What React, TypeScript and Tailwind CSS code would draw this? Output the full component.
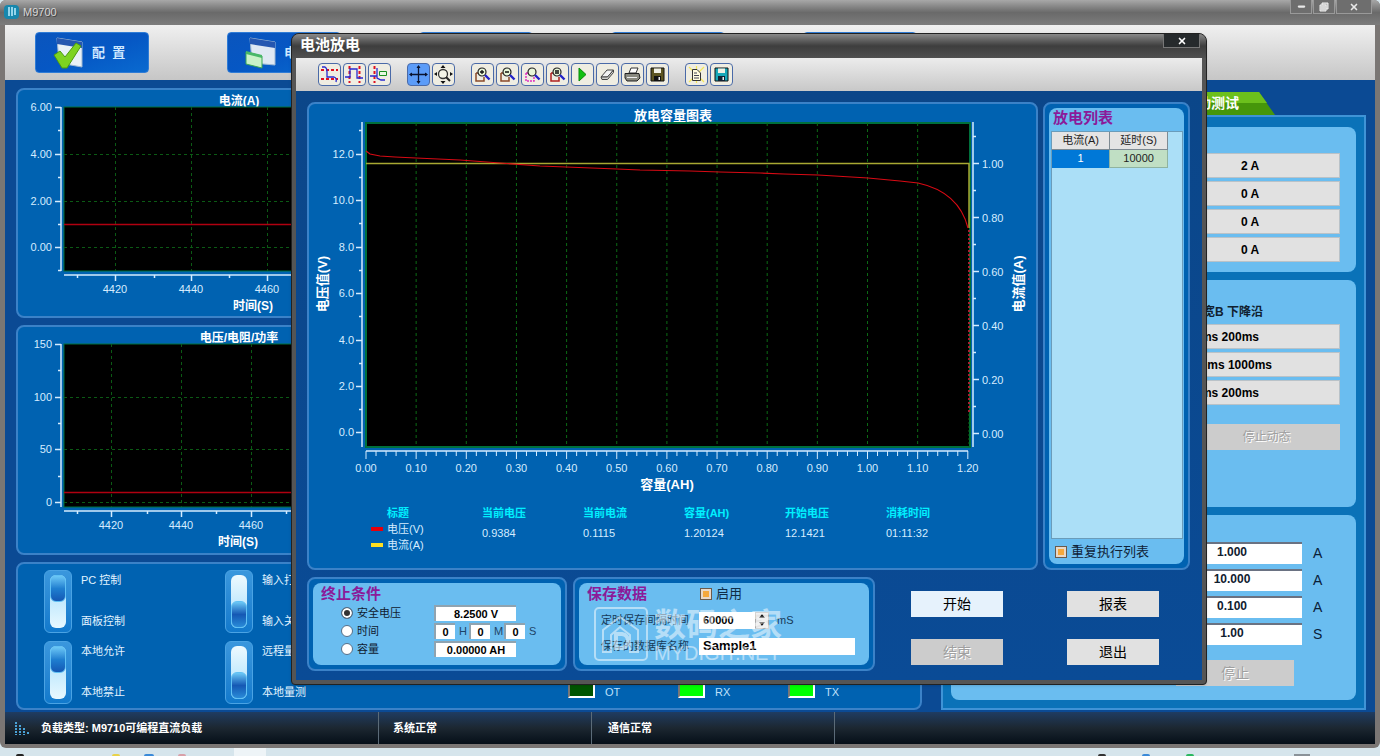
import type { ReactNode } from "react";
import { Minus, X } from "lucide-react";

type Tick = { at: number; label?: string };

const currentY: Tick[] = [
  { at: 17, label: "6.00" },
  { at: 40 },
  { at: 64, label: "4.00" },
  { at: 87 },
  { at: 111, label: "2.00" },
  { at: 134 },
  { at: 157, label: "0.00" },
  { at: 180 },
];
const currentX: Tick[] = [
  { at: 59 },
  { at: 97, label: "4420" },
  { at: 136 },
  { at: 173, label: "4440" },
  { at: 211 },
  { at: 249, label: "4460" },
];
const voltageY: Tick[] = [
  { at: 17, label: "150" },
  { at: 43 },
  { at: 70, label: "100" },
  { at: 96 },
  { at: 122, label: "50" },
  { at: 149 },
  { at: 175, label: "0" },
];
const voltageX: Tick[] = [
  { at: 59 },
  { at: 93, label: "4420" },
  { at: 129 },
  { at: 163, label: "4440" },
  { at: 198 },
  { at: 233, label: "4460" },
  { at: 268 },
];

function SmallChart(props: {
  title: string;
  top: number;
  bottom: number;
  yTicks: Tick[];
  xTicks: Tick[];
  line: number;
  axisTitleX: number;
}) {
  const { title, top, bottom, yTicks, xTicks, line, axisTitleX } = props;
  return (
    <svg
      viewBox="0 0 446 226"
      className="w-[446px] h-[226px] font-['Liberation_Sans','Noto_Sans_CJK_SC',sans-serif]"
    >
      <text x="221" y={top - 2} textAnchor="middle" className="fill-white text-xs font-bold">
        {title}
      </text>
      <rect x="46" y={top} width="350" height={bottom - top} fill="#000" stroke="#00703c" />
      <g stroke="#0b5a14" strokeDasharray="3 3">
        {xTicks
          .filter((t) => t.label)
          .map((t) => (
            <path key={t.at} d={`M${t.at}.5 ${top}V${bottom}`} />
          ))}
        {yTicks
          .filter((t) => t.label && t.at > top + 4)
          .map((t) => (
            <path key={t.at} d={`M46 ${t.at}.5H396`} />
          ))}
      </g>
      <path d={`M46 ${line}.5H396`} stroke="#b00010" strokeWidth="1.5" />
      <g stroke="#d5ecff" strokeWidth="1.5">
        <path d={`M43 ${top}V${bottom}`} />
        <path d={`M46 ${bottom + 4}H396`} />
        {yTicks.map((t) => (
          <path key={t.at} d={`M${t.label ? 37 : 40} ${t.at}.5H43`} />
        ))}
        {xTicks.map((t) => (
          <path key={t.at} d={`M${t.at}.5 ${bottom + 4}v${t.label ? 6 : 3}`} />
        ))}
      </g>
      <g className="fill-[#d5ecff] text-[11px]">
        {yTicks.map((t) => (
          <text key={t.at} x="34" y={t.at + 4} textAnchor="end">
            {t.label}
          </text>
        ))}
        {xTicks.map((t) => (
          <text key={t.at} x={t.at} y={bottom + 22} textAnchor="middle">
            {t.label}
          </text>
        ))}
      </g>
      <text x={axisTitleX} y={bottom + 39} textAnchor="middle" className="fill-white text-xs font-bold">
        时间(S)
      </text>
    </svg>
  );
}

const volts = ["12.0", "10.0", "8.0", "6.0", "4.0", "2.0", "0.0"];
const amps = ["1.00", "0.80", "0.60", "0.40", "0.20", "0.00"];

function DischargeChart() {
  const hours = Array.from({ length: 13 }, (_, i) => (i / 10).toFixed(2));
  return (
    <svg
      viewBox="0 0 727 392"
      className="block w-full font-['Liberation_Sans','Noto_Sans_CJK_SC',sans-serif]"
    >
      <rect x="57" y="19" width="604" height="324" fill="#000" stroke="#00703c" strokeWidth="2" />
      <g stroke="#0b6a14" strokeDasharray="3 3">
        {hours.slice(1, 12).map((h, i) => (
          <path key={h} d={`M${57 + (i + 1) * 50.15} 19V343`} />
        ))}
      </g>
      <path d="M57 59.5H660V124" fill="none" stroke="#a8a832" strokeWidth="1.5" />
      <path
        d="M57 47L61 50L71 52L86 53L107 54L151 56L191 59L231 62L257 63L308 65L331 66L381 67L411 68L451 69L475 70L509 71L559 74L591 77L609 79Q650 88 659 124"
        fill="none"
        stroke="#d80a14"
        strokeWidth="1.2"
      />
      <path d="M660 126V310" stroke="#a82030" strokeDasharray="2 2" strokeWidth="2" />
      <path d="M660 310V343" stroke="#0b6a14" strokeDasharray="2 2" />
      <g stroke="#d5ecff" strokeWidth="1.5">
        <path d="M53 18V343M664 18V343M57 347H659" />
        <path d="M50 26.5H53M664 32.5H667" />
        {volts.map((v, i) => (
          <path key={v} d={`M47 ${Math.round(50 + i * 46.4)}.5H53`} />
        ))}
        {volts.slice(1).map((v, i) => (
          <path key={v} d={`M50 ${Math.round(73 + i * 46.4)}.5H53`} />
        ))}
        {amps.map((a, i) => (
          <path key={a} d={`M664 ${59 + i * 54}.5H670`} />
        ))}
        {amps.slice(1).map((a, i) => (
          <path key={a} d={`M664 ${86 + i * 54}.5H667`} />
        ))}
      </g>
      <g stroke="#d5ecff">
        {Array.from({ length: 61 }, (_, i) => (
          <path key={i} d={`M${57 + i * 10.03} 347v${i % 5 ? 5 : 8}`} />
        ))}
      </g>
      <g className="fill-[#d5ecff] text-[11px]">
        {volts.map((v, i) => (
          <text key={v} x="45" y={Math.round(54 + i * 46.4)} textAnchor="end">
            {v}
          </text>
        ))}
        {amps.map((a, i) => (
          <text key={a} x="673" y={64 + i * 54}>
            {a}
          </text>
        ))}
        {hours.map((h, i) => (
          <text key={h} x={57 + i * 50.15} y="368" textAnchor="middle">
            {h}
          </text>
        ))}
      </g>
      <g textAnchor="middle" className="fill-white text-[13px] font-bold">
        <text x="364" y="16">
          放电容量图表
        </text>
        <text x="358" y="385">
          容量(AH)
        </text>
        <text transform="translate(18 180) rotate(-90)">电压值(V)</text>
        <text transform="translate(714 180) rotate(-90)">电流值(A)</text>
      </g>
    </svg>
  );
}

const readings = [
  ["当前电压", "0.9384"],
  ["当前电流", "0.1115"],
  ["容量(AH)", "1.20124"],
  ["开始电压", "12.1421"],
  ["消耗时间", "01:11:32"],
];

function Legend() {
  return (
    <div className="flex pl-[62px] pt-[9px] pb-[15px] text-[11px] leading-4">
      <div className="w-[111px]">
        <div className="pl-4 font-bold text-[#00f0ff]">标题</div>
        <div className="flex items-center gap-1 text-[#d5ecff]">
          <span className="w-3 h-1 bg-red-600" />
          电压(V)
        </div>
        <div className="flex items-center gap-1 text-[#d5ecff]">
          <span className="w-3 h-1 bg-yellow-300" />
          电流(A)
        </div>
      </div>
      {readings.map(([name, value]) => (
        <div key={name} className="w-[101px]">
          <div className="font-bold text-[#00f0ff]">{name}</div>
          <div className="pt-1 text-[#d5ecff]">{value}</div>
        </div>
      ))}
    </div>
  );
}

function Toggle({ on, upper, lower }: { on: boolean; upper: string; lower: string }) {
  return (
    <div className="flex gap-[9px]">
      <button
        type="button"
        role="switch"
        aria-checked={on}
        aria-label={upper}
        className="w-7 h-[63px] p-1 rounded-md border border-[#4aa3e4] bg-linear-to-b from-[#3a97dd] to-[#1179cc] flex justify-center"
      >
        <span
          className={`flex w-4 h-[53px] rounded-md ${
            on
              ? "items-start bg-linear-to-b from-[#9edcfb] to-[#e8f8ff]"
              : "items-end bg-linear-to-b from-[#eefaff] to-[#9edcfb]"
          }`}
        >
          <span
            className={`w-4 h-[27px] rounded-md border border-[#5fc0f4] ${
              on
                ? "bg-linear-to-b from-[#6cc8f6] via-[#1f7fd0] to-[#1558b4]"
                : "bg-linear-to-b from-[#6cc8f6] via-[#1558b4] to-[#2a8bd8]"
            }`}
          />
        </span>
      </button>
      <div className="flex flex-col justify-between pt-0.5 pb-1 text-[11px] leading-4 text-[#e2f3ff]">
        <span>{upper}</span>
        <span>{lower}</span>
      </div>
    </div>
  );
}

const leds = [
  { name: "OT", color: "bg-[#005400]" },
  { name: "RX", color: "bg-[#00ff00]" },
  { name: "TX", color: "bg-[#00ff00]" },
];

function Panel({ children, className = "" }: { children: ReactNode; className?: string }) {
  return (
    <div className={`border-2 border-[#3b82c8] rounded-lg bg-[#0062b1] ${className}`}>{children}</div>
  );
}

function MainButton({ label, text, children }: { label: string; text?: string; children?: ReactNode }) {
  return (
    <button
      type="button"
      aria-label={label}
      className="w-[114px] h-[41px] shrink-0 rounded-sm border border-[#2f7cd6] bg-linear-to-br from-[#0a55bd] via-[#0657c4] to-[#0a6ad0] flex items-center gap-2 pl-4 text-[13px] font-bold text-[#cfe8ff]"
    >
      {children}
      {text && <span className="whitespace-nowrap">{text}</span>}
    </button>
  );
}

function ConfigIcon() {
  return (
    <svg width="32" height="34" viewBox="0 0 32 34">
      <path d="M5 2L30 6V31L7 27Z" fill="#e9f0f6" stroke="#9db8d3" />
      <path d="M5 2L30 6V12L5 8Z" fill="#2557b0" />
      <path d="M2 19L8 15L13 21L24 7L29 10L15 32H10Z" fill="#7ed321" stroke="#4c9a10" />
    </svg>
  );
}

function BatteryIcon() {
  return (
    <svg width="32" height="34" viewBox="0 0 32 34">
      <path d="M6 2L31 6V29L8 27Z" fill="#dfe8f3" stroke="#9db8d3" />
      <path d="M6 2L31 6V12L6 8Z" fill="#2557b0" />
      <path d="M2 16L18 20V32L2 28Z" fill="#c9f2c8" stroke="#3aa655" />
      <path d="M2 15L18 19V22L2 18Z" fill="#48b868" />
    </svg>
  );
}

const card = "bg-[#6abdf0] rounded-lg";

function ValueRow({ text, pad = "justify-center" }: { text: string; pad?: string }) {
  return (
    <div className="flex justify-end">
      <button
        type="button"
        className={`w-[180px] h-[25px] flex items-center border border-[#b9c2c8] bg-[#e1e1e1] text-xs font-bold text-black ${pad}`}
      >
        {text}
      </button>
    </div>
  );
}

const testFields = [
  ["1.000", "A"],
  ["10.000", "A"],
  ["0.100", "A"],
  ["1.00", "S"],
];

function RightColumn() {
  return (
    <div className="w-[425px] shrink-0 pt-1 flex flex-col">
      <div className="flex pl-[190px]">
        <div className="relative w-[144px] h-[23px]">
          <svg viewBox="0 0 144 23" preserveAspectRatio="none" className="absolute inset-0 w-full h-full">
            <path d="M0 0H128L144 23H0Z" fill="#46960a" />
            <path d="M0 0H128L136 11H0Z" fill="#6cc01c" />
          </svg>
          <a href="#test" className="relative block pr-9 text-right text-sm leading-[23px] font-bold text-white">
            自动测试
          </a>
        </div>
      </div>
      <div className="flex-1 border-2 border-[#3f93d6] bg-[#0a72b8] px-2 pt-2.5 pb-2 flex flex-col gap-2">
        <div className={`${card} pt-[26px] pr-4 pb-2.5 flex flex-col gap-[3px]`}>
          <ValueRow text="2 A" />
          <ValueRow text="0 A" />
          <ValueRow text="0 A" />
          <ValueRow text="0 A" />
        </div>
        <div className={`${card} flex-1 pt-6 pr-4 flex flex-col gap-[3px]`}>
          <div className="pr-[77px] pb-px text-right text-xs leading-4 font-bold">脉宽B 下降沿</div>
          <ValueRow text="200ms 200ms" pad="justify-end pr-20" />
          <ValueRow text="200ms 1000ms" pad="justify-end pr-[67px]" />
          <ValueRow text="200ms 200ms" pad="justify-end pr-20" />
          <div className="flex justify-end pt-4">
            <button
              type="button"
              disabled
              className="w-[147px] h-[26px] bg-[#cccccc] text-xs text-[#a0a0a0] text-shadow-[1px_1px_0_#fff]"
            >
              停止动态
            </button>
          </div>
        </div>
        <div className={`${card} pt-[27px] pr-[31px] pb-3.5`}>
          <div className="flex flex-col items-end gap-[5px]">
            {testFields.map(([value, unit]) => (
              <label key={value} className="flex items-center gap-[11px] text-sm">
                <input
                  readOnly
                  value={value}
                  className="w-[140px] h-[22px] pb-1 bg-white border-t-2 border-gray-500 text-center text-xs font-bold outline-none"
                />
                <span className="w-3 text-[#0a2038]">{unit}</span>
              </label>
            ))}
          </div>
          <div className="flex justify-end pt-[15px] pr-[31px]">
            <button
              type="button"
              disabled
              className="w-[118px] h-[26px] bg-[#cccccc] text-sm text-[#a0a0a0] text-shadow-[1px_1px_0_#fff]"
            >
              停止
            </button>
          </div>
        </div>
      </div>
    </div>
  );
}

function Magnifier({ sign, box = "#8a4a2a" }: { sign?: string; box?: string }) {
  return (
    <>
      <path
        d="M3 8V16H11V12M3 8H6"
        fill="none"
        stroke={box}
        strokeWidth="1.5"
        strokeDasharray={sign === undefined ? "2 1" : undefined}
      />
      <circle cx="9" cy="7" r="4" fill="#e8f6d8" stroke="#222" strokeWidth="1.2" />
      {sign && <path d={sign} stroke="#111" strokeWidth="1.3" />}
      <path d="M12 10L16.5 14.5" stroke="#2222c8" strokeWidth="2.4" />
    </>
  );
}

const tools: { name: string; icon: ReactNode; active?: boolean }[][] = [
  [
    {
      name: "横向游标",
      icon: (
        <>
          <path d="M1 5H18M1 14H18" stroke="#e01020" strokeWidth="2" strokeDasharray="3 2" />
          <path d="M2 2H5Q7 3 7 7V12H14Q17 13 16 17" fill="none" stroke="#2a2ad0" strokeWidth="1.3" />
        </>
      ),
    },
    {
      name: "纵向游标",
      icon: (
        <>
          <path d="M4.500 1V18M14.500 1V18" stroke="#e01020" strokeWidth="2" strokeDasharray="3 2" />
          <path d="M0 12H5V4H12V13H18" fill="none" stroke="#2a2ad0" strokeWidth="1.3" />
        </>
      ),
    },
    {
      name: "游标标注",
      icon: (
        <>
          <path d="M4.500 1V18" stroke="#e01020" strokeWidth="2" strokeDasharray="3 2" />
          <path d="M0 11H7M7 3V13L11 15H15" fill="none" stroke="#2a2ad0" strokeWidth="1.3" />
          <path d="M9.500 6.500H16.500V10.500H9.500Z" fill="#e8f8e0" stroke="#1a9020" />
        </>
      ),
    },
  ],
  [
    {
      name: "移动",
      active: true,
      icon: (
        <>
          <path d="M9.500 1V18M1 9.500H18" stroke="#0a1430" strokeWidth="1.3" />
          <path
            d="M9.500 0L11.500 3H7.500ZM9.500 19L11.500 16H7.500ZM0 9.500L3 7.500V11.500ZM19 9.500L16 7.500V11.500Z"
            fill="#0a1430"
          />
        </>
      ),
    },
    {
      name: "缩放",
      icon: (
        <>
          <circle cx="9" cy="9" r="4.500" fill="#f4f4e8" stroke="#333" strokeWidth="1.3" />
          <path d="M12 12L16 16" stroke="#222" strokeWidth="2" />
          <path d="M9 0L11.500 3H6.500ZM9 19L11.500 16H6.500ZM0 9L3 7V11ZM19 9L16 7V11Z" fill="#111" />
        </>
      ),
    },
  ],
  [
    { name: "放大", icon: <Magnifier sign="M7 7H11M9 5V9" /> },
    { name: "缩小", icon: <Magnifier sign="M7 7H11" /> },
    { name: "框选放大", icon: <Magnifier box="#e030c0" /> },
    { name: "还原", icon: <Magnifier sign="M7 6H11M7 8H11" box="#b02020" /> },
    { name: "运行", icon: <path d="M6 3L13 9.500L6 16Z" fill="#12c012" stroke="#0a8a0a" /> },
    {
      name: "清除",
      icon: (
        <>
          <path d="M3 12L9 5H15.500L9.500 12Z" fill="#f2f2f2" stroke="#444" />
          <path d="M3 12H9.500L15.500 5V7.500L9.500 14.500H4Z" fill="#d0d0cc" stroke="#444" />
        </>
      ),
    },
    {
      name: "打印",
      icon: (
        <>
          <path d="M6 8L8 3H15L13 8Z" fill="#fff" stroke="#333" />
          <path d="M2 8.500H16L17 13L14 16H4L2 13Z" fill="#8a8a80" stroke="#222" />
          <path d="M4 12.500H14" stroke="#eee" />
        </>
      ),
    },
    {
      name: "保存",
      icon: (
        <>
          <path d="M3 3H16V16H3Z" fill="#5c5420" stroke="#111" />
          <path d="M6 3.500H13V8H6Z" fill="#f0f0e4" />
          <path d="M6 11H13V16H6Z" fill="#111" />
          <path d="M10.500 12H12V15H10.500Z" fill="#eee" />
        </>
      ),
    },
  ],
  [
    {
      name: "复制",
      icon: (
        <>
          <path d="M2 2L17 17M17 2L2 17M9.500 1V18" stroke="#f4e858" strokeWidth="1.2" />
          <path d="M5.500 4.500H10L13.500 8V15.500H5.500Z" fill="#fffbe0" stroke="#333" />
          <path d="M7 8H10M7 10.500H12M7 13H12" stroke="#445" />
        </>
      ),
    },
    {
      name: "保存数据",
      icon: (
        <>
          <path d="M3 3H16V16H3Z" fill="#18a8b8" stroke="#111" />
          <path d="M6 3.500H13V8H6Z" fill="#f0f0e4" />
          <path d="M6 11H13V16H6Z" fill="#123" />
          <path d="M10.500 12H12V15H10.500Z" fill="#eee" />
        </>
      ),
    },
  ],
];

const field =
  "bg-white border-t-2 border-l-2 border-[#8fa3b0] text-center text-[11px] font-bold text-black outline-none";
const heading = "text-[15px] leading-[18px] font-bold text-[#8b1a99]";

function BigCheck({ id }: { id: string }) {
  return (
    <input
      id={id}
      type="checkbox"
      defaultChecked
      className="appearance-none w-3 h-3 border border-[#6b5a4a] bg-[#f4a83c] ring-2 ring-inset ring-[#e8d8c8]"
    />
  );
}

const stopRadio =
  "appearance-none w-3 h-3 rounded-full bg-white border border-[#56708a] checked:bg-[#333] checked:ring-2 checked:ring-inset checked:ring-white";

function StopCard() {
  return (
    <Panel className="w-[260px] shrink-0 p-1">
      <div className={`${card} h-full pl-2 pt-0.5 pb-1`}>
        <h2 className={heading}>终止条件</h2>
        <div className="grid grid-cols-[93px_1fr] auto-rows-[18px] items-center pl-5 pt-px text-[11px]">
          <label className="flex items-center gap-1">
            <input type="radio" name="stop" defaultChecked className={stopRadio} />
            安全电压
          </label>
          <input aria-label="安全电压" defaultValue="8.2500 V" className={`${field} w-[82px] h-4`} />
          <label className="flex items-center gap-1">
            <input type="radio" name="stop" className={stopRadio} />
            时间
          </label>
          <div className="flex items-center gap-1 text-[#1d4468]">
            {["H", "M", "S"].map((u) => (
              <label key={u} className="flex items-center gap-1">
                <input defaultValue="0" className={`${field} w-[21px] h-4`} />
                <span className="w-[6px]">{u}</span>
              </label>
            ))}
          </div>
          <label className="flex items-center gap-1">
            <input type="radio" name="stop" className={stopRadio} />
            容量
          </label>
          <input aria-label="容量" defaultValue="0.00000 AH" className={`${field} w-[82px] h-4`} />
        </div>
      </div>
    </Panel>
  );
}

function Watermark() {
  return (
    <div className="absolute left-[19px] top-7 flex gap-1.5 opacity-50 pointer-events-none text-white">
      <svg width="54" height="54" viewBox="0 0 54 54" fill="none" stroke="#fff">
        <rect x="1" y="1" width="52" height="52" rx="4" strokeWidth="2" />
        <path d="M9 45V23L26 10L44 23V45H36V28L26 20L17 28V45Z" strokeWidth="2" />
        <path d="M22 27H28Q34 28 34 34Q34 40 28 41H22Z" strokeWidth="4" />
      </svg>
      <div>
        <div className="text-[32px] leading-9 font-bold">数码之家</div>
        <div className="text-xl leading-5">MYDIGIT.NET</div>
      </div>
    </div>
  );
}

function SaveCard() {
  return (
    <Panel className="relative w-[302px] shrink-0 p-1">
      <div className={`${card} h-full pl-2 pt-0.5 pb-1.5`}>
        <div className="flex items-center">
          <h2 className={`${heading} w-[113px]`}>保存数据</h2>
          <BigCheck id="enable" />
          <label htmlFor="enable" className="pl-1 text-[13px] leading-[18px] text-[#0f2c46]">
            启用
          </label>
        </div>
        <div className="grid grid-cols-[98px_1fr] auto-rows-[26px] items-center pl-3.5 pt-1 text-[11px] text-[#173a58]">
          <label htmlFor="interval">定时保存间隔时间</label>
          <div className="flex items-center gap-2">
            <div className="flex h-[17px] bg-white">
              <input id="interval" defaultValue="60000" className="w-14 pl-1 text-[11px] font-bold text-black outline-none" />
              <div className="flex flex-col w-3.5 bg-[#e4e4e4] border border-[#aaa]">
                <button type="button" aria-label="增加" className="flex-1 flex items-center justify-center">
                  <svg width="6" height="4" viewBox="0 0 6 4">
                    <path d="M0 4L3 0L6 4Z" fill="#111" />
                  </svg>
                </button>
                <button type="button" aria-label="减少" className="flex-1 flex items-center justify-center">
                  <svg width="6" height="4" viewBox="0 0 6 4">
                    <path d="M0 0L3 4L6 0Z" fill="#111" />
                  </svg>
                </button>
              </div>
            </div>
            <span>mS</span>
          </div>
          <label htmlFor="dbname">保存的数据库名称</label>
          <input
            id="dbname"
            defaultValue="Sample1"
            className="w-[156px] h-[17px] pl-1 bg-white text-[13px] font-bold text-black outline-none"
          />
        </div>
      </div>
      <Watermark />
    </Panel>
  );
}

function DischargeDialog() {
  return (
    <section
      role="dialog"
      aria-label="电池放电"
      className="absolute left-[291px] right-[173px] top-[33px] flex flex-col rounded-t-lg rounded-b-sm border border-[#222] bg-[#555555] shadow-sm overflow-hidden"
    >
      <header className="h-6 flex items-start justify-between pl-2 pr-1.5 bg-linear-to-b from-[#8a8a8a] via-[#3e3e3e] to-[#505050]">
        <h1 className="text-[15px] leading-[22px] font-bold text-white">电池放电</h1>
        <button
          type="button"
          aria-label="关闭"
          className="w-[37px] h-[14px] flex items-center justify-center border border-t-0 border-[#777] bg-[#262a2c] text-white"
        >
          <X size={10} strokeWidth={4} />
        </button>
      </header>
      <div className="mx-1 mb-1 flex flex-col">
        <div className="h-[33px] flex items-center gap-4 pl-[22px] bg-linear-to-b from-[#ececec] to-[#c8c8c8]">
          {tools.map((group, i) => (
            <div key={i} className="flex gap-0.5">
              {group.map((tool) => (
                <button
                  key={tool.name}
                  type="button"
                  aria-label={tool.name}
                  className={`w-[23px] h-[23px] flex items-center justify-center rounded-sm border border-[#4a6aa8] ${
                    tool.active ? "bg-[#5c9cf8]" : "bg-[#efede2]"
                  }`}
                >
                  <svg width="19" height="19" viewBox="0 0 19 19">
                    {tool.icon}
                  </svg>
                </button>
              ))}
            </div>
          ))}
        </div>
        <div className="bg-linear-to-b from-[#0b4689] to-[#0a4b96] pl-[11px] pr-3 pt-[11px] pb-[9px]">
          <div className="flex gap-[5px]">
            <Panel className="flex-1 min-w-0">
              <DischargeChart />
              <Legend />
            </Panel>
            <Panel className="w-[147px] shrink-0 p-1 flex">
              <div className={`${card} flex-1 flex flex-col pl-0.5 pr-px`}>
                <h2 className={`${heading} pt-px pb-1 pl-0.5`}>放电列表</h2>
                <div className="flex-1 border border-[#6a9cba] bg-[#abdff7]">
                  <table className="w-[116px] table-fixed border-collapse text-center text-[11px] leading-[17px]">
                    <thead>
                      <tr className="bg-[#e4e4e4] text-[#222]">
                        <th className="border border-t-0 border-l-0 border-[#7d8a92] font-normal">电流(A)</th>
                        <th className="border border-t-0 border-[#7d8a92] font-normal">延时(S)</th>
                      </tr>
                    </thead>
                    <tbody>
                      <tr>
                        <td className="bg-[#0078d7] text-white">1</td>
                        <td className="border border-[#8fb3a0] bg-[#c0dfc4] text-[#222]">10000</td>
                      </tr>
                    </tbody>
                  </table>
                </div>
                <div className="flex items-center gap-1 h-[25px] pl-1">
                  <BigCheck id="repeat" />
                  <label htmlFor="repeat" className="text-[13px] text-[#0f2238] whitespace-nowrap">
                    重复执行列表
                  </label>
                </div>
              </div>
            </Panel>
          </div>
          <div className="flex gap-1.5 pt-[7px]">
            <StopCard />
            <SaveCard />
            <div className="grid grid-cols-[92px_92px] auto-rows-[26px] gap-x-16 gap-y-[22px] content-start pl-[30px] pt-3.5 text-sm">
              <button type="button" className="bg-[#e6f2fc] text-black">
                开始
              </button>
              <button type="button" className="bg-[#e1e1e1] text-black">
                报表
              </button>
              <button type="button" disabled className="bg-[#cccccc] text-[#a0a0a0] text-shadow-[1px_1px_0_#fff]">
                结束
              </button>
              <button type="button" className="bg-[#e1e1e1] text-black">
                退出
              </button>
            </div>
          </div>
        </div>
      </div>
    </section>
  );
}

export default function App() {
  return (
    <div className="relative min-h-screen flex flex-col overflow-hidden bg-[#d6e5ec] text-[#10202f] font-['Liberation_Sans','Noto_Sans_CJK_SC',sans-serif]">
      <div className="flex-1 flex flex-col px-[5px] pb-1 rounded-t-md rounded-b-md bg-[#7a7674]">
        <header className="h-[25px] -mx-[5px] px-1 flex items-start justify-between rounded-t-md bg-linear-to-b from-[#a8a8a8] via-[#6a6a6a] to-[#7c7c7c]">
          <div className="flex items-center gap-1 h-6">
            <svg width="15" height="14" viewBox="0 0 15 14">
              <rect width="15" height="14" rx="4" fill="#1787ad" />
              <path d="M5 2V11M8 2V11M11 3V10" stroke="#bff0ff" strokeWidth="1.5" />
            </svg>
            <span className="text-[11px] text-[#d8d8d8] text-shadow-[1px_1px_0_#444]">M9700</span>
          </div>
          <div className="flex gap-px pr-1 text-[#e8e8e8]">
            <button type="button" aria-label="最小化" className="w-[22px] h-[14px] flex items-center justify-center border border-t-0 border-[#999] bg-[#6e6e6e]">
              <Minus size={9} strokeWidth={6} />
            </button>
            <button type="button" aria-label="还原" className="w-[22px] h-[14px] flex items-center justify-center border border-t-0 border-[#999] bg-[#6e6e6e]">
              <svg width="10" height="10" viewBox="0 0 10 10" fill="#bbb" stroke="#f0f0f0">
                <path d="M3 1H9V7H3Z" />
                <path d="M1 3H7V9H1ZM2 5H6M2 7H6" />
              </svg>
            </button>
            <button type="button" aria-label="关闭" className="w-9 h-[14px] flex items-center justify-center border border-t-0 border-[#999] bg-[#6e6e6e]">
              <X size={10} strokeWidth={4} />
            </button>
          </div>
        </header>
        <nav className="h-[55px] flex items-center gap-[78px] pl-[30px] bg-linear-to-b from-[#f0f0f0] to-[#c6c6c6]">
          <MainButton label="配置" text={"配\u00a0\u00a0置"}>
            <ConfigIcon />
          </MainButton>
          <MainButton label="电池" text={"电\u00a0\u00a0池"}>
            <BatteryIcon />
          </MainButton>
          <MainButton label="报表" />
          <MainButton label="设置" />
          <MainButton label="帮助" />
        </nav>
        <main className="flex-1 flex gap-[19px] pl-[11px] pr-[9px] pt-2 pb-0.5 bg-[#0b4a94]">
          <div className="flex-1 min-w-0 flex flex-col gap-[7px]">
            <Panel>
              <SmallChart
                title="电流(A)"
                top={17}
                bottom={181}
                yTicks={currentY}
                xTicks={currentX}
                line={134}
                axisTitleX={235}
              />
            </Panel>
            <Panel>
              <SmallChart
                title="电压/电阻/功率"
                top={17}
                bottom={180}
                yTicks={voltageY}
                xTicks={voltageX}
                line={165}
                axisTitleX={220}
              />
            </Panel>
            <Panel className="flex-1 flex pl-[26px] pt-1.5">
              <div className="w-[181px] flex flex-col gap-2">
                <Toggle on upper="PC 控制" lower="面板控制" />
                <Toggle on upper="本地允许" lower="本地禁止" />
              </div>
              <div className="w-[343px] flex flex-col gap-2">
                <Toggle on={false} upper="输入打开" lower="输入关闭" />
                <Toggle on={false} upper="远程量测" lower="本地量测" />
              </div>
              <div className="flex items-end pb-2.5">
                {leds.map((led) => (
                  <div key={led.name} className="w-[110px] flex items-end gap-2.5 text-[11px] leading-3 text-[#bfe0fa]">
                    <span className={`w-[27px] h-4 border-2 border-t-[#777] border-l-[#777] border-white ${led.color}`} />
                    {led.name}
                  </div>
                ))}
              </div>
            </Panel>
          </div>
          <RightColumn />
        </main>
        <footer className="h-8 flex items-center bg-linear-to-b from-[#1f3c62] via-[#1c2731] to-[#060f18] text-[11px] font-bold text-white">
          <div className="w-[374px] h-full flex items-center gap-2.5 pl-2.5 border-r border-[#5b6b78]">
            <svg width="16" height="14" viewBox="0 0 16 14" stroke="#4aa3d8" strokeWidth="2" strokeDasharray="2 1">
              <path d="M1 1V14M5 4V14M9 7V14M13 11V14" />
            </svg>
            负载类型: M9710可编程直流负载
          </div>
          <div className="w-[213px] h-full flex items-center pl-3.5 border-r border-[#5b6b78]">系统正常</div>
          <div className="w-[243px] h-full flex items-center pl-4 border-r border-[#5b6b78]">通信正常</div>
        </footer>
      </div>
      <div className="h-2 flex items-end justify-between pl-4 pr-[70px]">
        <div className="flex items-end gap-6">
          <span className="w-2 h-0.5 rounded-t-full bg-[#222]" />
          <span className="w-2 h-0.5 ml-16 rounded-t-full bg-[#e8d24a]" />
          <span className="w-2.5 h-0.5 rounded-t-full bg-[#3a8ad8]" />
          <span className="w-2 h-0.5 rounded-t-full bg-[#d8a0a8]" />
          <span className="w-8 h-2 ml-6 bg-[#eef4f7]" />
        </div>
        <div className="flex items-end gap-9">
          <span className="w-2 h-0.5 rounded-t-full bg-[#333]" />
          <span className="w-2 h-0.5 rounded-t-full bg-[#3a8ad8]" />
          <span className="w-2 h-0.5 rounded-t-full bg-[#2ab860]" />
          <span className="w-4 h-0.5 ml-16 bg-[#8a9298]" />
        </div>
      </div>
      <DischargeDialog />
    </div>
  );
}
